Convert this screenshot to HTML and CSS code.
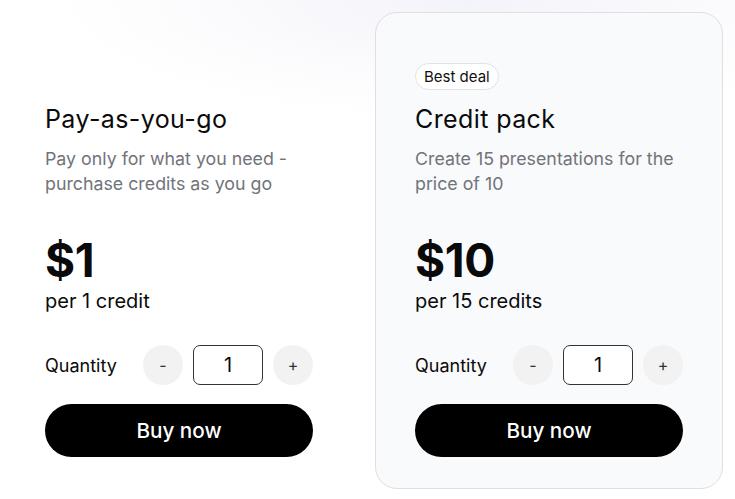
FILE: index.html
```html
<!DOCTYPE html>
<html lang="en">
<head>
<meta charset="utf-8">
<title>Pricing</title>
<link rel="stylesheet" href="styles.css">
</head>
<body>
<div class="plans">
  <div class="plan">
    <div class="badge-slot"></div>
    <h2 class="plan-title">Pay-as-you-go</h2>
    <p class="plan-desc">Pay only for what you need - purchase credits as you go</p>
    <div class="price">$1</div>
    <div class="price-unit">per 1 credit</div>
    <div class="qty-row">
      <span class="qty-label">Quantity</span>
      <div class="stepper">
        <button class="step-btn">-</button>
        <div class="qty-input">1</div>
        <button class="step-btn">+</button>
      </div>
    </div>
    <button class="buy-btn">Buy now</button>
  </div>
  <div class="plan plan-featured">
    <div class="badge-slot"><span class="badge">Best deal</span></div>
    <h2 class="plan-title">Credit pack</h2>
    <p class="plan-desc">Create 15 presentations for the price of 10</p>
    <div class="price">$10</div>
    <div class="price-unit">per 15 credits</div>
    <div class="qty-row">
      <span class="qty-label">Quantity</span>
      <div class="stepper">
        <button class="step-btn">-</button>
        <div class="qty-input">1</div>
        <button class="step-btn">+</button>
      </div>
    </div>
    <button class="buy-btn">Buy now</button>
  </div>
</div>
</body>
</html>
```

FILE: styles.css
```css
html, body {
  margin: 0;
  padding: 0;
  height: 100%;
}
body {
  font-family: Inter, "Noto Sans", sans-serif;
  color: #0a0a0a;
  background: radial-gradient(ellipse 420px 120px at 470px 0px, #f3f3fa 0%, #fbfbfd 60%, #ffffff 100%);
  overflow: hidden;
}
.plans {
  display: flex;
  gap: 22px;
  padding: 12px 0 0 5px;
}
.plan {
  box-sizing: border-box;
  flex: 0 0 348px;
  width: 348px;
  padding: 50px 39px 31px;
  border: 1px solid transparent;
  border-radius: 22px;
  display: flex;
  flex-direction: column;
}
.plan-featured {
  background: #f9fafc;
  border-color: #dedfe3;
}
.badge-slot {
  height: 27px;
  display: flex;
  align-items: center;
}
.badge {
  box-sizing: border-box;
  height: 27px;
  display: inline-flex;
  align-items: center;
  padding: 0 8px;
  border: 1px solid #e2e2e6;
  border-radius: 14px;
  background: #ffffff;
  font-size: 15px;
  color: #111;
}
.plan-title {
  margin: 13px 0 0;
  font-size: 25px;
  font-weight: 400;
  line-height: 32px;
  letter-spacing: 0.4px;
}
.plan-desc {
  margin: 11px 0 0;
  font-size: 17.8px;
  line-height: 25px;
  color: #71737b;
}
.price {
  margin-top: 40px;
  font-size: 46px;
  font-weight: 700;
  line-height: 48px;
  letter-spacing: -0.3px;
}
.price-unit {
  margin-top: 4px;
  font-size: 20px;
  line-height: 26px;
}
.qty-row {
  margin-top: 31px;
  display: flex;
  align-items: center;
  justify-content: space-between;
}
.qty-label {
  font-size: 18px;
}
.stepper {
  display: flex;
  gap: 10px;
}
.step-btn {
  width: 40px;
  height: 40px;
  border: none;
  border-radius: 50%;
  background: #f2f2f3;
  font-family: inherit;
  font-size: 16px;
  color: #333;
  padding: 0;
}
.qty-input {
  box-sizing: border-box;
  width: 70px;
  height: 40px;
  border: 1px solid #333;
  border-radius: 7px;
  background: #fff;
  display: flex;
  align-items: center;
  justify-content: center;
  font-size: 20px;
}
.buy-btn {
  margin-top: 19px;
  height: 53px;
  border: none;
  border-radius: 27px;
  background: #000;
  color: #fff;
  font-family: inherit;
  font-size: 20.7px;
  font-weight: 500;
}
```
